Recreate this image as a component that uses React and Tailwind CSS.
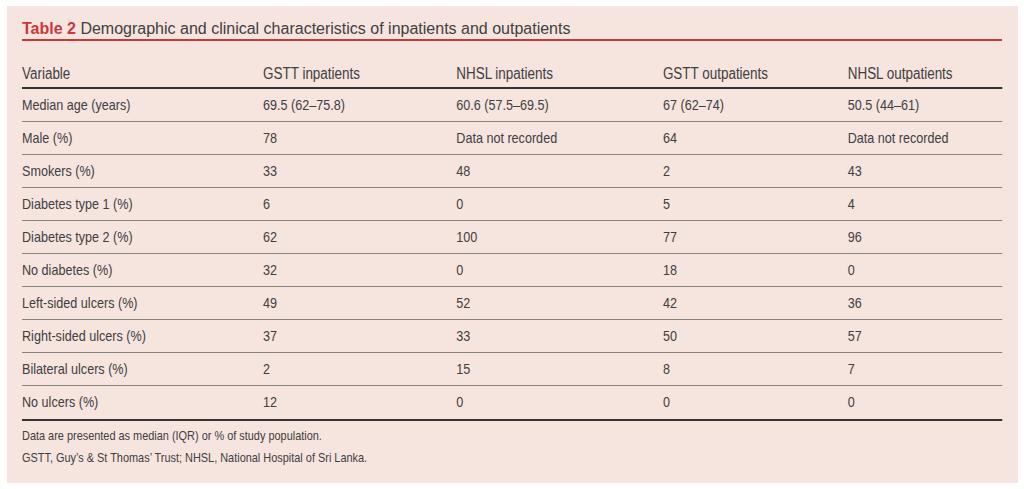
import React from "react";

const cols = ["Variable", "GSTT inpatients", "NHSL inpatients", "GSTT outpatients", "NHSL outpatients"];
const rows = [
  ["Median age (years)", "69.5 (62–75.8)", "60.6 (57.5–69.5)", "67 (62–74)", "50.5 (44–61)"],
  ["Male (%)", "78", "Data not recorded", "64", "Data not recorded"],
  ["Smokers (%)", "33", "48", "2", "43"],
  ["Diabetes type 1 (%)", "6", "0", "5", "4"],
  ["Diabetes type 2 (%)", "62", "100", "77", "96"],
  ["No diabetes (%)", "32", "0", "18", "0"],
  ["Left-sided ulcers (%)", "49", "52", "42", "36"],
  ["Right-sided ulcers (%)", "37", "33", "50", "57"],
  ["Bilateral ulcers (%)", "2", "15", "8", "7"],
  ["No ulcers (%)", "12", "0", "0", "0"],
];

export default function App() {
  return (
    <div className="w-[1024px] h-[489px] bg-white pt-[6px] pl-[7px] overflow-hidden">
      <div className="w-[1011px] h-[477px] bg-[#f6e4df] pt-[13px] pl-[15px] pr-[16px] text-[#404040] font-['Liberation_Sans',Arial,sans-serif]">
        <div className="h-[22px] leading-[20px] text-[16px] border-b-2 border-[#c9383a]">
          <span className="font-bold text-[#c9383a]">Table 2</span>{" "}
          <span>Demographic and clinical characteristics of inpatients and outpatients</span>
        </div>
        <div className="w-[1167px] origin-left scale-x-[0.84]">
          <div className="mt-[21px] grid grid-cols-[287px_230px_246px_220px_1fr] h-[27px] leading-[24px] text-[16px] border-b-2 border-[#333]">
            {cols.map((c) => (
              <div key={c}>{c}</div>
            ))}
          </div>
          {rows.map((r, i) => (
            <div
              key={r[0]}
              className={
                i === rows.length - 1
                  ? "grid grid-cols-[287px_230px_246px_220px_1fr] h-[35px] items-center text-[15px] border-b-2 border-[#333]"
                  : "grid grid-cols-[287px_230px_246px_220px_1fr] h-[33px] items-center text-[15px] border-b border-[#8a807d]"
              }
            >
              {r.map((c, j) => (
                <div key={j}>{c}</div>
              ))}
            </div>
          ))}
          <div className="mt-[4px] text-[13px] leading-[22px]">
            <div>Data are presented as median (IQR) or % of study population.</div>
            <div>GSTT, Guy’s &amp; St Thomas’ Trust; NHSL, National Hospital of Sri Lanka.</div>
          </div>
        </div>
      </div>
    </div>
  );
}
